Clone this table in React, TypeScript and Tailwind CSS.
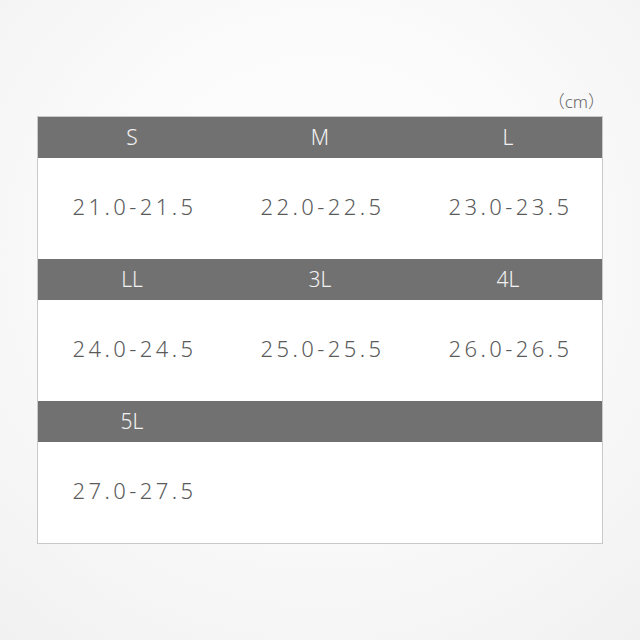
const rows = [
  { sizes: ['S', 'M', 'L'], values: ['21.0-21.5', '22.0-22.5', '23.0-23.5'] },
  { sizes: ['LL', '3L', '4L'], values: ['24.0-24.5', '25.0-25.5', '26.0-26.5'] },
  { sizes: ['5L', '', ''], values: ['27.0-27.5', '', ''] },
];

export default function App() {
  return (
    <div
      className="w-[640px] h-[640px] bg-[radial-gradient(circle_at_50%_40%,#ffffff_0%,#fbfbfb_45%,#f1f1f1_100%)] pt-[91px] pl-[37px]"
      style={{ fontFamily: '"Noto Sans", "Noto Sans CJK JP", sans-serif' }}
    >
      <div className="w-[566px]">
        <div className="flex justify-end -mr-[2px] h-[25px] text-[17px] leading-[22px] text-[#666] font-light">（cm）</div>
        <div className="border border-[#c9c9c9] bg-white">
          {rows.map((row, i) => (
            <div key={i}>
              <div className="grid grid-cols-3 h-[41px] bg-[#727171] text-[#f2f2f2] text-[21px] font-light">
                {row.sizes.map((s, j) => (
                  <div key={j} className="flex items-center justify-center">{s}</div>
                ))}
              </div>
              <div className="grid grid-cols-3 h-[101px] pb-[5px] text-[22px] font-light text-[#5a5a5a] tracking-[3.4px]">
                {row.values.map((v, j) => (
                  <div key={j} className="flex items-center justify-center pl-[5px]">{v}</div>
                ))}
              </div>
            </div>
          ))}
        </div>
      </div>
    </div>
  );
}
